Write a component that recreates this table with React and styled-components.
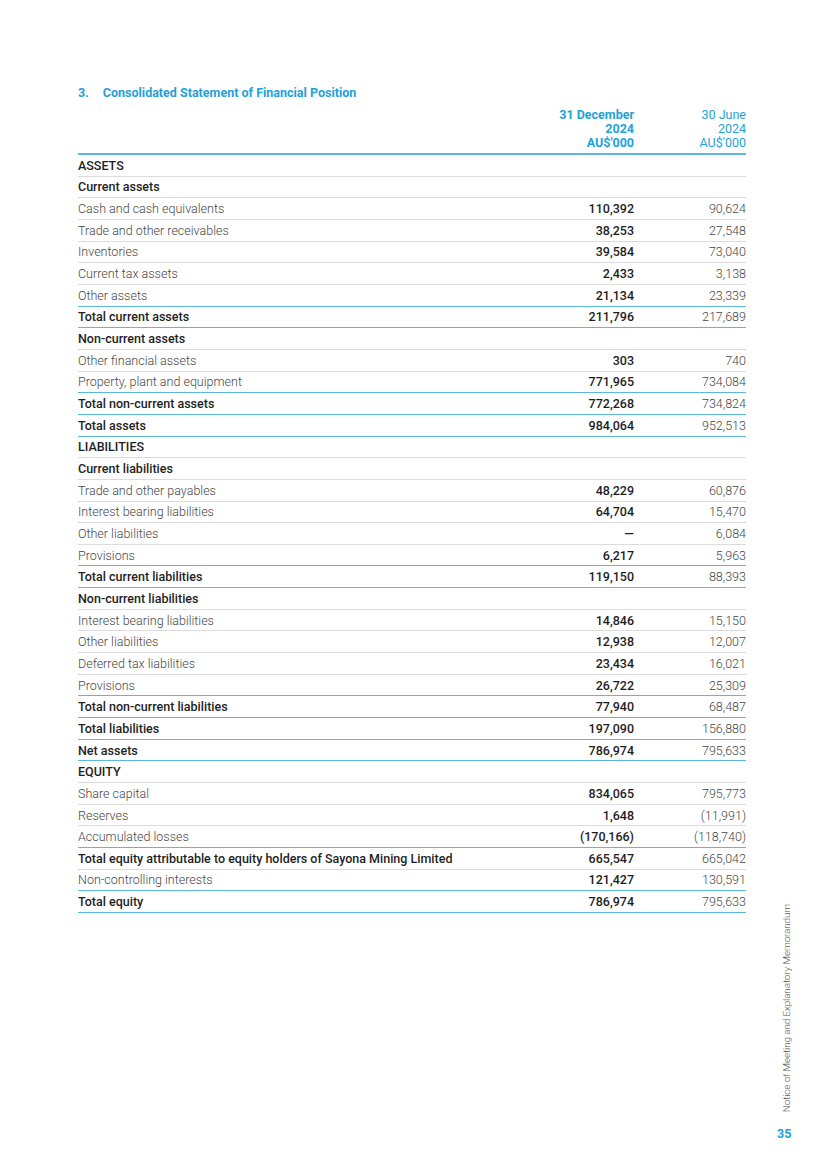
import styled, { createGlobalStyle } from "styled-components";

const GlobalStyle = createGlobalStyle`
  html, body {
    margin: 0;
    padding: 0;
    background: #ffffff;
  }
  body {
    font-family: Roboto, "Liberation Sans", sans-serif;
    color: #222;
  }
`;

const BLUE = "#1ea2d8";
const LINE_BLUE = "#5cb9dc";
const LINE_GREY = "#dcdcdc";

const rows = [
  { label: "ASSETS", kind: "head" },
  { label: "Current assets", kind: "head" },
  { label: "Cash and cash equivalents", a: "110,392", b: "90,624" },
  { label: "Trade and other receivables", a: "38,253", b: "27,548" },
  { label: "Inventories", a: "39,584", b: "73,040" },
  { label: "Current tax assets", a: "2,433", b: "3,138" },
  { label: "Other assets", a: "21,134", b: "23,339", blue: true },
  { label: "Total current assets", a: "211,796", b: "217,689", kind: "total", blue: true },
  { label: "Non-current assets", kind: "head" },
  { label: "Other financial assets", a: "303", b: "740" },
  { label: "Property, plant and equipment", a: "771,965", b: "734,084", blue: true },
  { label: "Total non-current assets", a: "772,268", b: "734,824", kind: "total", blue: true },
  { label: "Total assets", a: "984,064", b: "952,513", kind: "total", blue: true },
  { label: "LIABILITIES", kind: "head" },
  { label: "Current liabilities", kind: "head" },
  { label: "Trade and other payables", a: "48,229", b: "60,876" },
  { label: "Interest bearing liabilities", a: "64,704", b: "15,470" },
  { label: "Other liabilities", a: "—", b: "6,084" },
  { label: "Provisions", a: "6,217", b: "5,963", blue: true },
  { label: "Total current liabilities", a: "119,150", b: "88,393", kind: "total", blue: true },
  { label: "Non-current liabilities", kind: "head" },
  { label: "Interest bearing liabilities", a: "14,846", b: "15,150" },
  { label: "Other liabilities", a: "12,938", b: "12,007" },
  { label: "Deferred tax liabilities", a: "23,434", b: "16,021" },
  { label: "Provisions", a: "26,722", b: "25,309", blue: true },
  { label: "Total non-current liabilities", a: "77,940", b: "68,487", kind: "total", blue: true },
  { label: "Total liabilities", a: "197,090", b: "156,880", kind: "total", blue: true },
  { label: "Net assets", a: "786,974", b: "795,633", kind: "total", blue: true },
  { label: "EQUITY", kind: "head" },
  { label: "Share capital", a: "834,065", b: "795,773" },
  { label: "Reserves", a: "1,648", b: "(11,991)" },
  { label: "Accumulated losses", a: "(170,166)", b: "(118,740)", blue: true },
  { label: "Total equity attributable to equity holders of Sayona Mining Limited", a: "665,547", b: "665,042", kind: "total" },
  { label: "Non-controlling interests", a: "121,427", b: "130,591", blue: true },
  { label: "Total equity", a: "786,974", b: "795,633", kind: "total", blue: true },
];

const Page = styled.div`
  width: 825px;
  height: 1168px;
  box-sizing: border-box;
  padding: 86px 0 27px 78px;
  display: grid;
  grid-template-columns: 668px 1fr;
`;

const Main = styled.main`
  display: flex;
  flex-direction: column;
`;

const Title = styled.h1`
  margin: 0;
  display: flex;
  gap: 14px;
  font-size: 12.5px;
  line-height: 14px;
  font-weight: 700;
  color: ${BLUE};
`;

const Table = styled.div`
  margin-top: 8px;
  display: grid;
  grid-template-columns: 1fr 120px 112px;
`;

const HeadCell = styled.div`
  text-align: right;
  font-size: 12.5px;
  line-height: 14px;
  color: ${BLUE};
  font-weight: ${(p) => (p.$current ? 700 : 400)};
  padding-bottom: 3px;
  border-bottom: 2px solid ${LINE_BLUE};
`;

const Row = styled.div`
  display: contents;
`;

const Cell = styled.div`
  box-sizing: border-box;
  height: 21.66px;
  display: flex;
  align-items: center;
  justify-content: ${(p) => (p.$num ? "flex-end" : "flex-start")};
  font-size: 12.5px;
  white-space: nowrap;
  color: ${(p) => (p.$bold ? "#1e1e1e" : "#474747")};
  font-weight: ${(p) => (p.$bold ? 500 : 300)};
  border-bottom: ${(p) => (p.$blue ? `1.6px solid ${LINE_BLUE}` : `1px solid ${LINE_GREY}`)};
`;

const Side = styled.aside`
  display: flex;
  flex-direction: column;
  align-items: flex-start;
  justify-content: flex-end;
  padding-left: 34px;
`;

const SideText = styled.div`
  writing-mode: vertical-rl;
  transform: rotate(180deg);
  font-size: 9.9px;
  font-weight: 300;
  letter-spacing: -0.1px;
  color: #555;
  margin-bottom: 14px;
  margin-left: 1px;
`;

const PageNo = styled.div`
  font-size: 12.5px;
  font-weight: 700;
  color: ${BLUE};
  margin-left: -3px;
`;

export default function App() {
  return (
    <>
      <GlobalStyle />
      <Page>
        <Main>
          <Title>
            <span>3.</span>
            <span>Consolidated Statement of Financial Position</span>
          </Title>
          <Table>
            <HeadCell />
            <HeadCell $current>
              31 December
              <br />
              2024
              <br />
              AU$'000
            </HeadCell>
            <HeadCell>
              30 June
              <br />
              2024
              <br />
              AU$'000
            </HeadCell>
            {rows.map((r, i) => {
              const bold = r.kind === "head" || r.kind === "total";
              return (
                <Row key={i}>
                  <Cell $bold={bold} $blue={r.blue}>{r.label}</Cell>
                  <Cell $num $bold $blue={r.blue}>{r.a}</Cell>
                  <Cell $num $blue={r.blue}>{r.b}</Cell>
                </Row>
              );
            })}
          </Table>
        </Main>
        <Side>
          <SideText>Notice of Meeting and Explanatory Memorandum</SideText>
          <PageNo>35</PageNo>
        </Side>
      </Page>
    </>
  );
}
